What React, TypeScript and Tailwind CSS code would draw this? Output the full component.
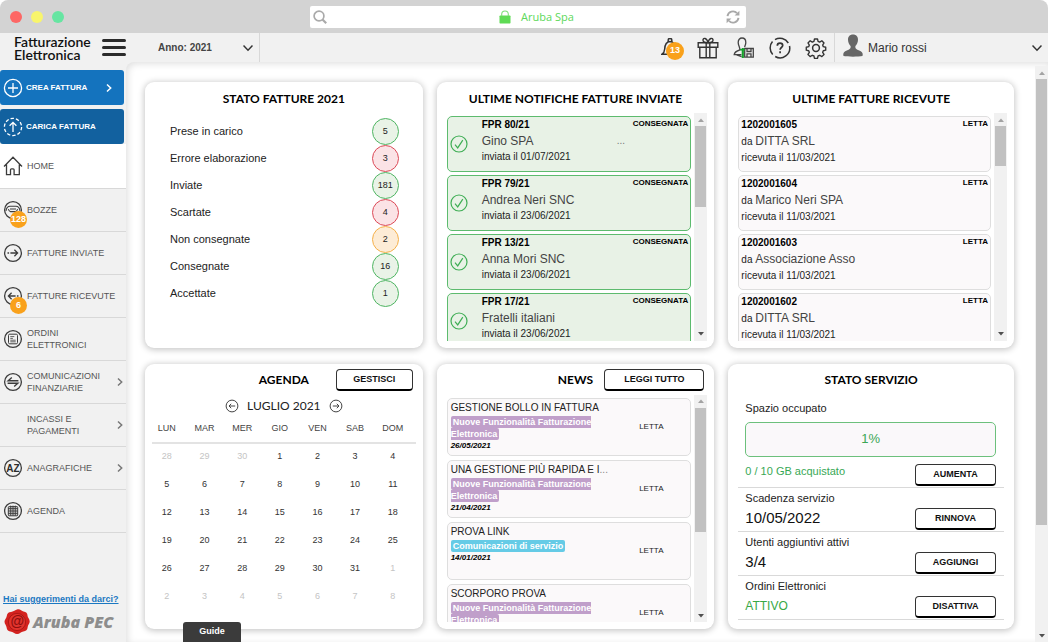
import React from "react";

type Tone = "green" | "red" | "orange";

const toneClass: Record<Tone, string> = {
  green: "border-[#4fb563] bg-[#e9f3e7]",
  red: "border-[#dc4a58] bg-[#fbe3e6]",
  orange: "border-[#f5b04a] bg-[#fdecd6]",
};

const statuses: { label: string; count: number; tone: Tone }[] = [
  { label: "Prese in carico", count: 5, tone: "green" },
  { label: "Errore elaborazione", count: 3, tone: "red" },
  { label: "Inviate", count: 181, tone: "green" },
  { label: "Scartate", count: 4, tone: "red" },
  { label: "Non consegnate", count: 2, tone: "orange" },
  { label: "Consegnate", count: 16, tone: "green" },
  { label: "Accettate", count: 1, tone: "green" },
];

const sent = [
  { id: "FPR 80/21", name: "Gino SPA", date: "01/07/2021", more: true },
  { id: "FPR 79/21", name: "Andrea Neri SNC", date: "23/06/2021" },
  { id: "FPR 13/21", name: "Anna Mori SNC", date: "23/06/2021" },
  { id: "FPR 17/21", name: "Fratelli italiani", date: "23/06/2021" },
];

const received = [
  { id: "1202001605", name: "DITTA SRL" },
  { id: "1202001604", name: "Marico Neri SPA" },
  { id: "1202001603", name: "Associazione Asso" },
  { id: "1202001602", name: "DITTA SRL" },
];

const news = [
  { title: "GESTIONE BOLLO IN FATTURA", tag: "feature", date: "26/05/2021" },
  { title: "UNA GESTIONE PIÙ RAPIDA E I", cut: true, tag: "feature", date: "21/04/2021" },
  { title: "PROVA LINK", tag: "service", date: "14/01/2021" },
  { title: "SCORPORO PROVA", tag: "feature", date: "" },
];

const weekdays = ["LUN", "MAR", "MER", "GIO", "VEN", "SAB", "DOM"];
const firstDay = new Date(2021, 5, 28);
const weeks = Array.from({ length: 6 }, (_, w) =>
  Array.from({ length: 7 }, (_, d) => {
    const day = new Date(firstDay.getFullYear(), firstDay.getMonth(), firstDay.getDate() + w * 7 + d);
    return { day: day.getDate(), current: day.getMonth() === 6 };
  }),
);

function Chevron({ className, dir = "down" }: { className: string; dir?: "down" | "right" }) {
  return (
    <svg viewBox="0 0 10 10" className={className} fill="none" stroke="currentColor" strokeWidth="1.5" aria-hidden="true">
      {dir === "down" ? <path d="M0.5 2.5 5 7.2 9.5 2.5" /> : <path d="M3 1.5 6.7 5 3 8.5" />}
    </svg>
  );
}

function ScrollBar({ size }: { size: number }) {
  return (
    <div className="flex w-[13px] shrink-0 flex-col bg-[#f1f1f1]" aria-hidden="true">
      <div className="flex h-[13px] items-center justify-center">
        <svg viewBox="0 0 6 4" className="h-1 w-1.5 fill-[#a3a3a3]"><path d="M0 4 3 0.5 6 4Z" /></svg>
      </div>
      <div className="flex-1 px-px">
        <div className="bg-[#c1c1c1]" style={{ height: `${size}%` }} />
      </div>
      <div className="flex h-[13px] items-center justify-center">
        <svg viewBox="0 0 6 4" className="h-1 w-1.5 fill-[#505050]"><path d="M0 0 3 3.5 6 0Z" /></svg>
      </div>
    </div>
  );
}

function Card({ title, action, actionClass, children }: {
  title: string;
  action?: string;
  actionClass?: string;
  children: React.ReactNode;
}) {
  return (
    <section className="flex min-h-0 min-w-0 flex-col overflow-hidden rounded-[9px] bg-white shadow-[0_1px_6px_1px_rgba(0,0,0,0.22)]">
      <div className="grid h-[31px] shrink-0 grid-cols-[1fr_auto_1fr] items-center px-2.5 pt-0.5">
        <h2 className="col-start-2 font-[Lato] text-[12px] leading-5 font-bold whitespace-nowrap text-black">{title}</h2>
        {action && (
          <div className="flex justify-end">
            <ActionButton className={actionClass ?? ""}>{action}</ActionButton>
          </div>
        )}
      </div>
      {children}
    </section>
  );
}

function ActionButton({ children, className }: { children: string; className: string }) {
  return (
    <button
      type="button"
      className={`h-[22px] shrink-0 rounded-[4px] border border-b-2 border-[#333] border-b-black bg-white pt-px text-[9px] font-bold text-[#111] ${className}`}
    >
      {children}
    </button>
  );
}

function SideIcon({ kind }: { kind: string }) {
  if (kind === "home")
    return (
      <svg viewBox="0 0 20 20" className="size-5 shrink-0" fill="none" stroke="#3c3c3c" strokeWidth="1.3">
        <path d="M1 10.5 10 1.2l9 9.3M3.5 8.5V18.6h4v-4.8c0-.6.4-1 1-1h1.6c.6 0 1 .4 1 1v4.8h5.2V8.5" />
      </svg>
    );
  return (
    <svg viewBox="0 0 20 20" className="size-5 shrink-0" fill="none" stroke="#3c3c3c" strokeWidth="1.3">
      {kind !== "none" && <circle cx="10" cy="10" r="8.4" />}
      {kind === "draft" && <path d="M3 10.800c.6-3.600 2.400-4.600 4-4.600h6c1.600 0 3.400 1 4 4.600M5.400 9.200c.6 2 1 2.400 2 2.400h5.200c1 0 1.400-.4 2-2.400M7 9h6" strokeWidth="1.100" />}
      {kind === "sent" && <path d="M4.5 10h1.6M7.4 10h7M11.4 6.8l3.2 3.2-3.2 3.2" />}
      {kind === "received" && <path d="M15.5 10h-1.6M12.6 10h-7M8.6 6.8 5.4 10l3.2 3.2" />}
      {kind === "orders" && (
        <g strokeWidth="1">
          <rect x="5.5" y="5.2" width="9" height="9.6" rx="1.2" />
          <path d="M7.3 7.6h4M7.3 9.4h2.6M7.3 11.2h5.4M7.3 12.8h5.4" strokeWidth="0.8" />
        </g>
      )}
      {kind === "finance" && <path d="M15.4 8.7H5.200l3.600-3.200M4.600 11.300h10.200l-3.600 3.200" strokeWidth="1.400" />}
      {kind === "az" && (
        <text x="10" y="13.6" textAnchor="middle" stroke="none" fill="#2c2c2c" fontSize="10" fontWeight="bold" fontFamily="Liberation Sans, sans-serif">AZ</text>
      )}
      {kind === "calendar" && (
        <g strokeWidth="1">
          <rect x="5.3" y="5.6" width="9.4" height="9.2" rx="0.8" fill="#c9c9c9" />
          <path d="M5.3 7.6h9.4M5.3 10h9.4M5.3 12.4h9.4M7.7 4.6v10M10 4.6v10M12.3 4.6v10" strokeWidth="0.900" />
        </g>
      )}
    </svg>
  );
}

const menu: { label: string; icon: string; badge?: string; arrow?: boolean; active?: boolean }[] = [
  { label: "HOME", icon: "home", active: true },
  { label: "BOZZE", icon: "draft", badge: "128" },
  { label: "FATTURE INVIATE", icon: "sent" },
  { label: "FATTURE RICEVUTE", icon: "received", badge: "6" },
  { label: "ORDINI ELETTRONICI", icon: "orders" },
  { label: "COMUNICAZIONI FINANZIARIE", icon: "finance", arrow: true },
  { label: "INCASSI E PAGAMENTI", icon: "none", arrow: true },
  { label: "ANAGRAFICHE", icon: "az", arrow: true },
  { label: "AGENDA", icon: "calendar" },
];

function Sidebar() {
  return (
    <aside className="flex w-[126px] shrink-0 flex-col pt-2">
      <div className="flex flex-col gap-1 pr-0.5">
        <button type="button" className="flex h-[35px] items-center rounded-[3px] bg-[#1473be] pr-2.5 pl-[3px] text-[8px] font-bold text-white">
          <svg viewBox="0 0 20 20" className="mr-[3px] size-5" fill="none" stroke="#fff" strokeWidth="1.3">
            <circle cx="10" cy="10" r="8.6" />
            <path d="M10 5v10M5 10h10" />
          </svg>
          CREA FATTURA
          <Chevron dir="right" className="ml-auto size-2.5" />
        </button>
        <button type="button" className="flex h-[35px] items-center rounded-[3px] bg-[#12619f] pl-[3px] text-[8px] font-bold text-white">
          <svg viewBox="0 0 20 20" className="mr-[3px] size-5" fill="none" stroke="#fff" strokeWidth="1.3">
            <circle cx="10" cy="10" r="8.6" strokeDasharray="3.4 2" />
            <path d="M10 15V5.4M6.6 8.8 10 5.4l3.4 3.4" />
          </svg>
          CARICA FATTURA
        </button>
      </div>
      <nav className="flex flex-col">
        {menu.map((m) => (
          <a
            key={m.label}
            href="#"
            className={`flex items-center border-b border-[#d8d8d8] pr-px pl-[3px] ${m.active ? "h-[45px] bg-white" : "h-[43px]"}`}
          >
            <span className="relative">
              <SideIcon kind={m.icon} />
              {m.badge && (
                <span className="absolute top-[11px] left-[7px] flex size-[17px] items-center justify-center rounded-full bg-[#f9a11b] text-[9px] font-bold text-white">
                  {m.badge}
                </span>
              )}
            </span>
            <span className="ml-1 w-24 shrink-0 text-[9px] leading-3 text-[#555]">
              <span className={m.arrow || m.icon === "orders" ? "block w-20" : "block"}>{m.label}</span>
            </span>
            {m.arrow && <Chevron dir="right" className="-ml-2 size-2.5 shrink-0 text-[#777]" />}
          </a>
        ))}
      </nav>
      <div className="mt-auto flex flex-col gap-[3px] pb-1.5 pl-[3px]">
        <a href="#" className="text-[9px] leading-3 font-bold whitespace-nowrap text-[#1b78c2] underline">Hai suggerimenti da darci?</a>
        <div className="flex items-center gap-0.5">
          <svg viewBox="0 0 28 28" className="size-7" aria-hidden="true">
            <path d="M14 1.5c3-1 4.500 1.600 6.500 1.900 2.600.4 4 1.600 4 4.200 0 2 2.300 3.400 2.200 6 0 2.400-1.800 3.200-2 5.400-.3 3-1.700 4.200-4.400 4.400-2.300.2-3.500 2.700-6.300 2.600-2.400 0-3.400-2-5.600-2.200-3-.3-4.600-1.300-4.800-4.200-.2-2.300-2.200-3.500-2.100-6 .1-2.300 1.800-3.200 2.200-5.400C4.200 5.300 5.500 4.300 8 4c2.300-.3 3.400-1.700 6-2.500Z" fill="#d3221f" />
            <circle cx="14" cy="14" r="8.6" fill="#e2332d" stroke="#b01714" strokeWidth="1" />
            <text x="14" y="18.200" textAnchor="middle" fontSize="14" fontStyle="italic" fontWeight="bold" fontFamily="Liberation Sans, sans-serif" fill="#8d0f0d">@</text>
          </svg>
          <span className="font-['Open_Sans'] text-[16px] leading-5 font-extrabold whitespace-nowrap text-[#8d8d8d] italic">Aruba PEC</span>
        </div>
      </div>
    </aside>
  );
}

function TitleBar() {
  return (
    <div className="grid h-[33px] shrink-0 grid-cols-[1fr_436px_1fr] items-center rounded-t-lg bg-[#d3d3d3] pl-2">
      <div className="flex gap-[9px] pl-0.5">
        <span className="size-3 rounded-full bg-[#fd6765]" />
        <span className="size-3 rounded-full bg-[#f8f56c]" />
        <span className="size-3 rounded-full bg-[#67e5a2]" />
      </div>
      <div className="flex h-[22px] items-center justify-between rounded-[2px] bg-white px-[3px]">
        <svg viewBox="0 0 14 14" className="size-3.5" fill="none" stroke="#aaa" strokeWidth="1.7">
          <circle cx="6" cy="6" r="4.900" />
          <path d="m9.500 9.500 3.700 3.700" strokeWidth="2.200" />
        </svg>
        <span className="flex items-center gap-2.5 pl-5 font-['Open_Sans'] text-[11px] leading-4 text-[#5cd85a]">
          <svg viewBox="0 0 12 14" className="h-3.5 w-3">
            <rect x="0.500" y="5.500" width="11" height="8" rx="0.700" fill="#5edb54" />
            <path d="M2.700 6V4.300a3.300 3.300 0 0 1 6.600 0V6" fill="none" stroke="#7fdf78" strokeWidth="1.100" />
          </svg>
          Aruba Spa
        </span>
        <button type="button" aria-label="Ricarica" className="mr-[3px]">
          <svg viewBox="0 0 14 14" className="size-3.5" fill="none" stroke="#a9a9a9" strokeWidth="1.900">
            <path d="M1.500 6.200A5.500 5.500 0 0 1 11 3.200M12.500 7.800A5.500 5.500 0 0 1 3 10.800" />
            <path d="M13.400.8v4.800H8.600zM.6 13.200V8.400h4.800z" fill="#a9a9a9" stroke="none" />
          </svg>
        </button>
      </div>
    </div>
  );
}

function Header() {
  return (
    <header className="flex h-[29px] shrink-0 items-center">
      <div className="flex w-[126px] shrink-0 items-center pl-3.5">
        <h1 className="w-[88px] font-[Lato] text-[14px] leading-[13px] font-semibold text-[#111]">Fatturazione Elettronica</h1>
        <button type="button" aria-label="Menu" className="flex w-6 flex-col gap-1">
          <span className="h-[3px] rounded-full bg-[#2b2b2b]" />
          <span className="h-[3px] rounded-full bg-[#2b2b2b]" />
          <span className="h-[3px] rounded-full bg-[#2b2b2b]" />
        </button>
      </div>
      <div className="relative flex h-full w-[134px] shrink-0 items-center border-r border-[#d8d8d8]">
        <select aria-label="Anno" className="h-6 w-full appearance-none bg-transparent pl-8 text-[10px] font-bold text-[#444] outline-none">
          <option>Anno: 2021</option>
        </select>
        <Chevron className="pointer-events-none absolute right-1.5 size-2.5 text-[#333]" />
      </div>
      <div className="ml-auto flex h-full items-center gap-3.5 pr-[7px]">
        <button type="button" aria-label="Notifiche" className="relative w-[22px]">
          <svg viewBox="0 0 20 20" className="size-5" fill="none" stroke="#333" strokeWidth="1.500">
            <path d="M1 16.200c2-1.200 2.500-2.700 2.700-5.200.2-4.500 1.800-7 5.300-7.400 3.500.4 5.100 2.900 5.300 7.400.2 2.500.7 4 2.700 5.200ZM7.200 3.700V2.200a1.800 1.800 0 0 1 3.600 0v1.500" />
          </svg>
          <span className="absolute top-1 left-[5px] flex size-[18px] items-center justify-center rounded-full bg-[#f9a11b] text-[9px] font-bold text-white">13</span>
        </button>
        <button type="button" aria-label="Premi">
          <svg viewBox="0 0 22 22" className="size-[22px]" fill="none" stroke="#333" strokeWidth="1.400">
            <path d="M1.200 5.800h19.600v4.400H1.200zM2.800 10.200h16.400v10.600H2.800zM9.200 5.800v15M12.800 5.800v15" />
            <path d="M10.600 5.600C7 5.600 5.800 4.400 6 2.800 6.300.8 9.600.4 11 5.400 12.400.4 15.700.8 16 2.800c.2 1.600-1 2.800-4.600 2.800" />
          </svg>
        </button>
        <button type="button" aria-label="Firma">
          <svg viewBox="0 0 22 22" className="size-[22px]" fill="none" stroke="#444" strokeWidth="1.300">
            <path d="M6.800 13c.6-2.200-1.600-4.400-1.600-7.600C5.200 2.800 6.700 1 9 1s3.800 1.800 3.800 4.400c0 2-.8 3.200-1.200 4.600M6.800 13C3.800 13.800 1.600 14.700 1.200 17.600h7.200M3.600 17.800l5 1.800" />
            <path d="M11.700 11.500h8.600v8.600h-8.600z" />
            <path d="M14 11.500v3h4v-3M14 20v-3.200h4V20" />
            <path d="M9.800 11v10" stroke="#17a02c" strokeWidth="2.200" />
            <path d="M7 12.800h5" stroke="#17a02c" strokeWidth="1.500" />
          </svg>
        </button>
        <button type="button" aria-label="Aiuto">
          <svg viewBox="0 0 22 22" className="size-[22px]" fill="none" stroke="#333" strokeWidth="1.500">
            <path d="M3.500 4.600A9.700 9.700 0 0 0 3.700 17.500M6.200 19.500A9.700 9.700 0 0 0 20.500 9M19.300 6A9.700 9.700 0 0 0 6 2.600" />
            <path d="M8.300 8.700c0-1.700 1.200-2.600 2.700-2.600s2.700 1 2.700 2.400c0 2-2.600 2-2.600 4.200M11.100 14.300v1.900" strokeWidth="1.700" />
          </svg>
        </button>
        <button type="button" aria-label="Impostazioni">
          <svg viewBox="0 0 22 22" className="size-[22px]" fill="none" stroke="#333" strokeWidth="1.500" strokeLinejoin="round">
            <path d="M9.300 1.200h3.400l.6 2.700 1.800.8 2.400-1.500 2.400 2.400-1.500 2.400.7 1.700 2.700.7v3.200l-2.700.7-.7 1.700 1.500 2.400-2.400 2.400-2.400-1.500-1.800.8-.6 2.700H9.300l-.6-2.700-1.800-.8-2.400 1.500-2.400-2.400 1.500-2.400-.7-1.700-2.700-.7v-3.200l2.700-.7.7-1.700-1.500-2.400 2.400-2.400 2.400 1.500 1.800-.8z" transform="translate(1.100 0.900) scale(0.900)" />
            <circle cx="11" cy="11" r="3.400" />
          </svg>
        </button>
      </div>
      <button type="button" className="flex h-full w-[214px] shrink-0 items-center border-l border-[#d8d8d8] pr-1.5 pl-2 text-[12px] text-[#333]">
        <svg viewBox="0 0 20 23" className="mr-[5px] mb-1 h-[23px] w-5 fill-[#666]" aria-hidden="true">
          <path d="M10 .5c3.300 0 5 2.200 5 5.200 0 3-1.400 5-2.600 6.400-.3 1.800.3 3 2 3.700 2.500 1 4.800 1.800 5.200 3.700.2 1.200.2 2-.2 2.600-4 .8-14.800.8-18.800 0-.4-.6-.4-1.400-.2-2.600.4-1.900 2.700-2.700 5.200-3.700 1.700-.7 2.300-1.900 2-3.700C6.400 10.700 5 8.700 5 5.700 5 2.700 6.700.5 10 .5Z" />
        </svg>
        Mario rossi
        <Chevron className="ml-auto size-2.5" />
      </button>
    </header>
  );
}

function CheckIcon() {
  return (
    <svg viewBox="0 0 18 18" className="size-[18px] shrink-0" fill="none" stroke="#3fae55" strokeWidth="1.200" aria-hidden="true">
      <circle cx="9" cy="9" r="8" />
      <path d="m5 9.700 2.700 3.200L12.800 5.200" />
    </svg>
  );
}

function CircleArrow({ left }: { left?: boolean }) {
  return (
    <svg viewBox="0 0 14 14" className="size-3.5" fill="none" stroke="#444" strokeWidth="1" aria-hidden="true">
      <circle cx="7" cy="7" r="5.900" />
      {left ? <path d="M10.200 7H4M6.200 4.800 4 7l2.200 2.200" /> : <path d="M3.800 7H10M7.800 4.800 10 7 7.800 9.200" />}
    </svg>
  );
}

function ServiceRow({ label, value, action, green }: { label: string; value: string; action: string; green?: boolean }) {
  return (
    <div className="flex h-11 items-end justify-between border-b border-[#d9d9d9] pr-2 pb-px pl-[7px]">
      <dl className="flex h-full flex-col">
        <dt className="text-[11px] leading-5 text-[#222]">{label}</dt>
        <dd className={green ? "text-[12px] leading-5 text-[#38a845]" : "text-[15px] leading-5 text-[#111]"}>{value}</dd>
      </dl>
      <ActionButton className="w-[81px]">{action}</ActionButton>
    </div>
  );
}

function Dashboard() {
  return (
    <main className="grid min-h-0 min-w-0 flex-1 grid-cols-[278fr_278fr_286fr] grid-rows-2 gap-x-3.5 gap-y-4 pt-5 pr-[21px] pb-[13px] pl-[19px]">
      <Card title="STATO FATTURE 2021">
        <ul className="mt-[5px] pr-6 pl-[25px]">
          {statuses.map((s) => (
            <li key={s.label} className="flex h-[27px] items-center justify-between text-[11px] text-[#222]">
              {s.label}
              <span className={`flex size-[27px] items-center justify-center rounded-full border text-[9px] text-[#222] ${toneClass[s.tone]}`}>
                {s.count}
              </span>
            </li>
          ))}
        </ul>
      </Card>

      <Card title="ULTIME NOTIFICHE FATTURE INVIATE">
        <div className="mb-[7px] flex min-h-0 flex-1 gap-[3px] overflow-hidden pr-[7px] pl-2.5">
          <ul className="flex min-w-0 flex-1 flex-col gap-[3px] overflow-hidden pt-[3px]">
            {sent.map((n) => (
              <li key={n.id} className="flex h-14 shrink-0 items-center rounded-[5px] border border-[#5dbb6e] bg-[#e8f2e6] pl-0.5">
                <CheckIcon />
                <div className="ml-3.5 flex h-full flex-1 flex-col text-[10px] leading-4 text-[#222]">
                  <div className="flex justify-between pr-0.5">
                    <span className="font-bold text-black">{n.id}</span>
                    <span className="text-[8px] leading-[14px] font-bold text-black">CONSEGNATA</span>
                  </div>
                  <div className="flex text-[12px] text-[#444]">
                    <span className="w-[135px]">{n.name}</span>
                    {n.more && <span className="text-[10px] text-[#777]">...</span>}
                  </div>
                  <span>inviata il {n.date}</span>
                </div>
              </li>
            ))}
          </ul>
          <ScrollBar size={40} />
        </div>
      </Card>

      <Card title="ULTIME FATTURE RICEVUTE">
        <div className="mb-[7px] flex min-h-0 flex-1 gap-[3px] overflow-hidden pr-[7px] pl-2.5">
          <ul className="flex min-w-0 flex-1 flex-col gap-[3px] overflow-hidden pt-[3px]">
            {received.map((n) => (
              <li key={n.id} className="flex h-14 shrink-0 flex-col rounded-[5px] border border-[#dedede] bg-[#fbf9fa] px-0.5 text-[10px] leading-4 text-[#222]">
                <div className="flex justify-between">
                  <span className="font-bold text-black">{n.id}</span>
                  <span className="text-[8px] leading-[14px] font-bold text-black">LETTA</span>
                </div>
                <div>
                  da <span className="text-[12px] text-[#444]">{n.name}</span>
                </div>
                <span>ricevuta il 11/03/2021</span>
              </li>
            ))}
          </ul>
          <ScrollBar size={20} />
        </div>
      </Card>

      <Card title="AGENDA" action="GESTISCI" actionClass="w-[77px]">
        <div className="mt-0.5 flex h-[19px] items-center justify-center gap-2">
          <button type="button" aria-label="Mese precedente"><CircleArrow left /></button>
          <span className="font-[Lato] text-[12px] leading-4 text-[#222]">LUGLIO 2021</span>
          <button type="button" aria-label="Mese successivo"><CircleArrow /></button>
        </div>
        <div className="px-[7px]">
          <table className="w-full table-fixed border-collapse text-center text-[9px]">
            <thead>
              <tr className="h-[27px] border-b-2 border-[#e3e3e3] text-[#444]">
                {weekdays.map((d) => (
                  <th key={d} className="pr-2 font-normal">{d}</th>
                ))}
              </tr>
            </thead>
            <tbody>
              {weeks.map((week, i) => (
                <tr key={i} className="h-7">
                  {week.map((c, j) => (
                    <td key={j} className={`pr-2 ${c.current ? "text-[#333]" : "text-[#c4c4c4]"}`}>{c.day}</td>
                  ))}
                </tr>
              ))}
            </tbody>
          </table>
        </div>
      </Card>

      <Card title="NEWS" action="LEGGI TUTTO" actionClass="w-[100px]">
        <div className="mb-[7px] flex min-h-0 flex-1 gap-[3px] overflow-hidden pr-[7px] pl-2.5">
          <ul className="flex min-w-0 flex-1 flex-col gap-1 overflow-hidden pt-[3px]">
            {news.map((n) => (
              <li key={n.title} className="flex h-[58px] shrink-0 items-center rounded-[5px] border border-[#dedede] bg-[#fbf9fa] pl-[3px]">
                <div className="h-full min-w-0 flex-1 pt-px">
                  <h3 className="text-[10px] leading-4 whitespace-nowrap text-[#222]">
                    {n.title}
                    {n.cut && <span className="text-[#888]">...</span>}
                  </h3>
                  <p className="text-[9px] leading-3 font-bold text-white">
                    {n.tag === "feature" ? (
                      <span className="rounded-[2px] bg-[#c09fca] px-0.5 py-px">Nuove Funzionalità Fatturazione Elettronica</span>
                    ) : (
                      <span className="rounded-[2px] bg-[#65cbe6] px-0.5 py-px">Comunicazioni di servizio</span>
                    )}
                  </p>
                  <p className="text-[8px] leading-3 font-bold text-black italic">{n.date}</p>
                </div>
                <span className="w-[78px] shrink-0 text-center text-[8px] text-[#222]">LETTA</span>
              </li>
            ))}
          </ul>
          <ScrollBar size={62} />
        </div>
      </Card>

      <Card title="STATO SERVIZIO">
        <div className="flex flex-col px-2.5">
          <div className="flex flex-col pr-2 pl-[7px]">
            <span className="mt-[3px] text-[11px] leading-5 text-[#222]">Spazio occupato</span>
            <div className="mt-1 flex h-[35px] items-center justify-center rounded-[5px] border border-[#6cc07c] bg-[#faf8fa] text-[13px] text-[#3aa655]">
              1%
            </div>
          </div>
          <div className="flex h-[31px] items-end justify-between border-b border-[#d9d9d9] pr-2 pb-px pl-[7px]">
            <span className="self-center text-[11px] leading-5 text-[#38a855]">0 / 10 GB acquistato</span>
            <ActionButton className="w-[81px]">AUMENTA</ActionButton>
          </div>
          <ServiceRow label="Scadenza servizio" value="10/05/2022" action="RINNOVA" />
          <ServiceRow label="Utenti aggiuntivi attivi" value="3/4" action="AGGIUNGI" />
          <ServiceRow label="Ordini Elettronici" value="ATTIVO" action="DISATTIVA" green />
        </div>
      </Card>
    </main>
  );
}

export default function App() {
  return (
    <div className="flex h-screen flex-col overflow-hidden bg-white font-['Liberation_Sans',Arial,sans-serif]">
      <TitleBar />
      <div className="flex min-h-0 flex-1 flex-col bg-[#f1f1f1]">
        <Header />
        <div className="flex min-h-0 flex-1">
          <Sidebar />
          <div className="relative flex min-w-0 flex-1 rounded-tl-lg bg-white shadow-[inset_2px_2px_7px_rgba(0,0,0,0.12)]">
            <Dashboard />
            <div className="flex pt-1">
              <ScrollBar size={81} />
            </div>
            <button type="button" className="absolute bottom-0 left-[57px] h-5 w-[58px] rounded-t-[3px] bg-[#3b3b3b] text-[9px] font-bold text-white">
              Guide
            </button>
          </div>
        </div>
      </div>
    </div>
  );
}
